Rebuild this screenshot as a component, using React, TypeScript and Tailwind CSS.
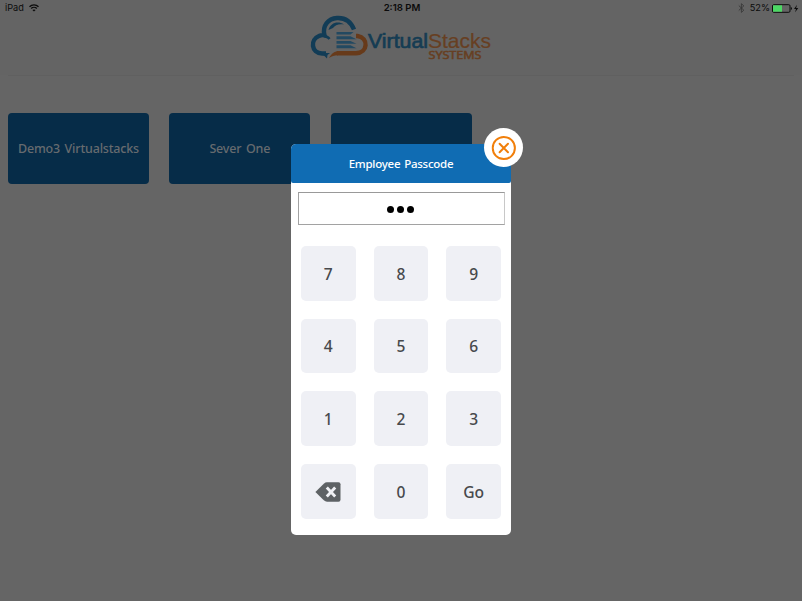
import React from 'react';

function StatusBar() {
  return (
    <div className="flex h-4 items-center justify-between pl-[5px] pr-[3px] font-['Inter','Liberation_Sans',sans-serif] text-[9.600px] leading-4 text-[#0b0b0b]">
      <div className="flex w-[120px] items-center gap-[5px]">
        <span className="text-[9.200px]">iPad</span>
        <svg width="10" height="8" viewBox="0 0 10 8" fill="none" stroke="#0b0b0b" strokeWidth="1.4">
          <path d="M.5 2.7C3 .2 7 .2 9.500 2.700M2.200 4.500C3.700 3 6.300 3 7.800 4.500" />
          <path d="M5 7.600 3.400 6C4.300 5.200 5.700 5.200 6.600 6Z" fill="#0b0b0b" stroke="none" />
        </svg>
      </div>
      <span className="font-semibold">2:18 PM</span>
      <div className="flex w-[120px] items-center justify-end">
        <svg className="mr-[5px]" width="7" height="10" viewBox="0 0 7 10" fill="none" stroke="#393939" strokeWidth=".9">
          <path d="m.8 2.600 5 4.600L3.400 9.400V.7L5.800 2.900l-5 4.500" />
        </svg>
        <span className="mr-[2px] text-[9.200px]">52%</span>
        <svg width="27" height="9" viewBox="0 0 27 9">
          <rect x=".5" y=".7" width="17.500" height="7.600" rx="1.200" fill="none" stroke="#0b0b0b" />
          <path d="M1 1.300H10V7.700H1Z" fill="#4cd964" />
          <path d="M18.800 3v3c1.600-.3 1.600-2.700 0-3ZM25 .7 22 5h2l-.9 3.300L26.300 4h-2.200Z" fill="#0b0b0b" />
        </svg>
      </div>
    </div>
  );
}

function Logo() {
  return (
    <svg className="ml-[309px]" width="184" height="50" viewBox="309 14 184 50">
      <g fill="none" strokeLinecap="butt">
        <path d="M326 53.500h-4c-11-.5-12-14-3-17.500 2-1 4-1 5.500-.6C322 26 328 18.500 337 18c8-.5 14 4 17 11.500" stroke="#123c56" strokeWidth="4.400" />
        <path d="M324 36c2.500 0 4.500 1.500 5.500 3" stroke="#123c56" strokeWidth="2.500" />
        <path d="M317 53h13l-2.500 2-.5 3.500-3-3Z" fill="#123c56" />
        <path d="M328.500 30c2-7 9-9.500 15.500-5.500-5-1-9 .5-11 3.500Z" fill="#123c56" />
        <path d="M337 53.300h19c12-.5 13-15.300 1.500-17.300h-1.500" stroke="#673a1a" strokeWidth="4.400" />
        <path d="M329 58c3-4.500 5-6.700 9-6.700v4c-4 0-6 1-9 2.700Z" fill="#673a1a" />
        <path d="M336.500 32h17l-3 2.600h-14ZM336.500 36.300h14l6 3h-20ZM336.500 41h14l6 2.700h-20ZM336.500 45.300h14l6 2.900h-20Z" fill="#234961" />
      </g>
      <text x="368" y="48" textLength="60" lengthAdjust="spacingAndGlyphs" fill="#153c53" stroke="#153c53" strokeWidth=".7" fontFamily="Liberation Sans, sans-serif" fontSize="21">Virtual</text>
      <text x="428" y="48" textLength="63" lengthAdjust="spacingAndGlyphs" fill="#673f22" stroke="#673f22" strokeWidth=".2" fontFamily="Liberation Sans, sans-serif" fontSize="21">Stacks</text>
      <text x="428.500" y="59.300" textLength="53" lengthAdjust="spacingAndGlyphs" fill="#673f22" stroke="#673f22" strokeWidth=".6" fontFamily="Open Sans, Noto Sans, sans-serif" fontSize="11.500">SYSTEMS</text>
    </svg>
  );
}

function StackTile({ label }: { label: string }) {
  return (
    <div className="flex h-[71px] w-[141px] items-center justify-center rounded-[4px] bg-[#062c48] pt-[2px] text-[12.500px] font-medium tracking-[-0.180px] [word-spacing:1.500px] text-[#666b6f]">
      {label}
    </div>
  );
}

function BackspaceIcon() {
  return (
    <svg width="26" height="20" viewBox="0 0 26 20">
      <path d="M.4 10 8.800 1.700Q10.400.3 12 .3h11.500q2 0 2 2v15.400q0 2-2 2H12q-1.600 0-3.200-1.400Z" fill="#5e6265" />
      <path d="m11.800 5.600 8.400 8.800m0-8.800-8.400 8.800" stroke="#f0f1f5" strokeWidth="2.900" />
    </svg>
  );
}

const keys = ['7', '8', '9', '4', '5', '6', '1', '2', '3', 'back', '0', 'Go'];

function PasscodeDialog() {
  return (
    <div className="absolute left-[291px] top-[144px] h-[391px] w-[220px] rounded-[5px] bg-white">
      <div className="flex h-[39px] items-center justify-center rounded-t-[5px] rounded-b-[2px] bg-[#106cb3] pt-px text-[11.500px] font-medium tracking-[-0.260px] [word-spacing:1.200px] text-white">
        Employee Passcode
      </div>
      <div className="mx-[7px] mt-[9px] flex h-[33px] w-[207px] items-center justify-center gap-[2.200px] border border-[#a2a2a2] border-t-[#999] border-r-[#c8c8c8] pt-[2px] pr-[2px]">
        <i className="size-[7.800px] rounded-full bg-black" />
        <i className="size-[7.800px] rounded-full bg-black" />
        <i className="size-[7.800px] rounded-full bg-black" />
      </div>
      <div className="ml-[10px] mt-[21px] grid w-[200px] grid-cols-3 gap-x-[18.200px] gap-y-[18.200px]">
        {keys.map((key) => (
          <button key={key} className="flex h-[54.500px] items-center justify-center rounded-[5px] bg-[#eff0f5] pt-[2px] text-[15.600px] font-medium text-[#47494c]">
            {key === 'back' ? <BackspaceIcon /> : key}
          </button>
        ))}
      </div>
      <button className="absolute left-[193px] top-[-16px] flex size-[39px] items-center justify-center rounded-full bg-white">
        <svg className="translate-x-[0.300px] translate-y-[0.500px]" width="25" height="25" viewBox="0 0 25 25" fill="none" stroke="#f17f0b" strokeWidth="2" strokeLinecap="round">
          <circle cx="12.500" cy="12.500" r="11.100" />
          <path d="m8.300 8.300 8.400 8.400m0-8.400-8.400 8.400" />
        </svg>
      </button>
    </div>
  );
}

export default function App() {
  return (
    <main className="relative h-[601px] w-[802px] overflow-hidden bg-[#656565] font-['Noto_Sans','Open_Sans',sans-serif]">
      <header className="h-[75px] bg-[#646464]">
        <StatusBar />
        <div className="-mt-0.5"><Logo /></div>
      </header>
      <div className="mx-2 h-px bg-[#606060]" />
      <section className="ml-2 mt-[37px] flex gap-[20.300px]">
        <StackTile label="Demo3 Virtualstacks" />
        <StackTile label="Sever One" />
        <StackTile label="" />
      </section>
      <PasscodeDialog />
    </main>
  );
}
